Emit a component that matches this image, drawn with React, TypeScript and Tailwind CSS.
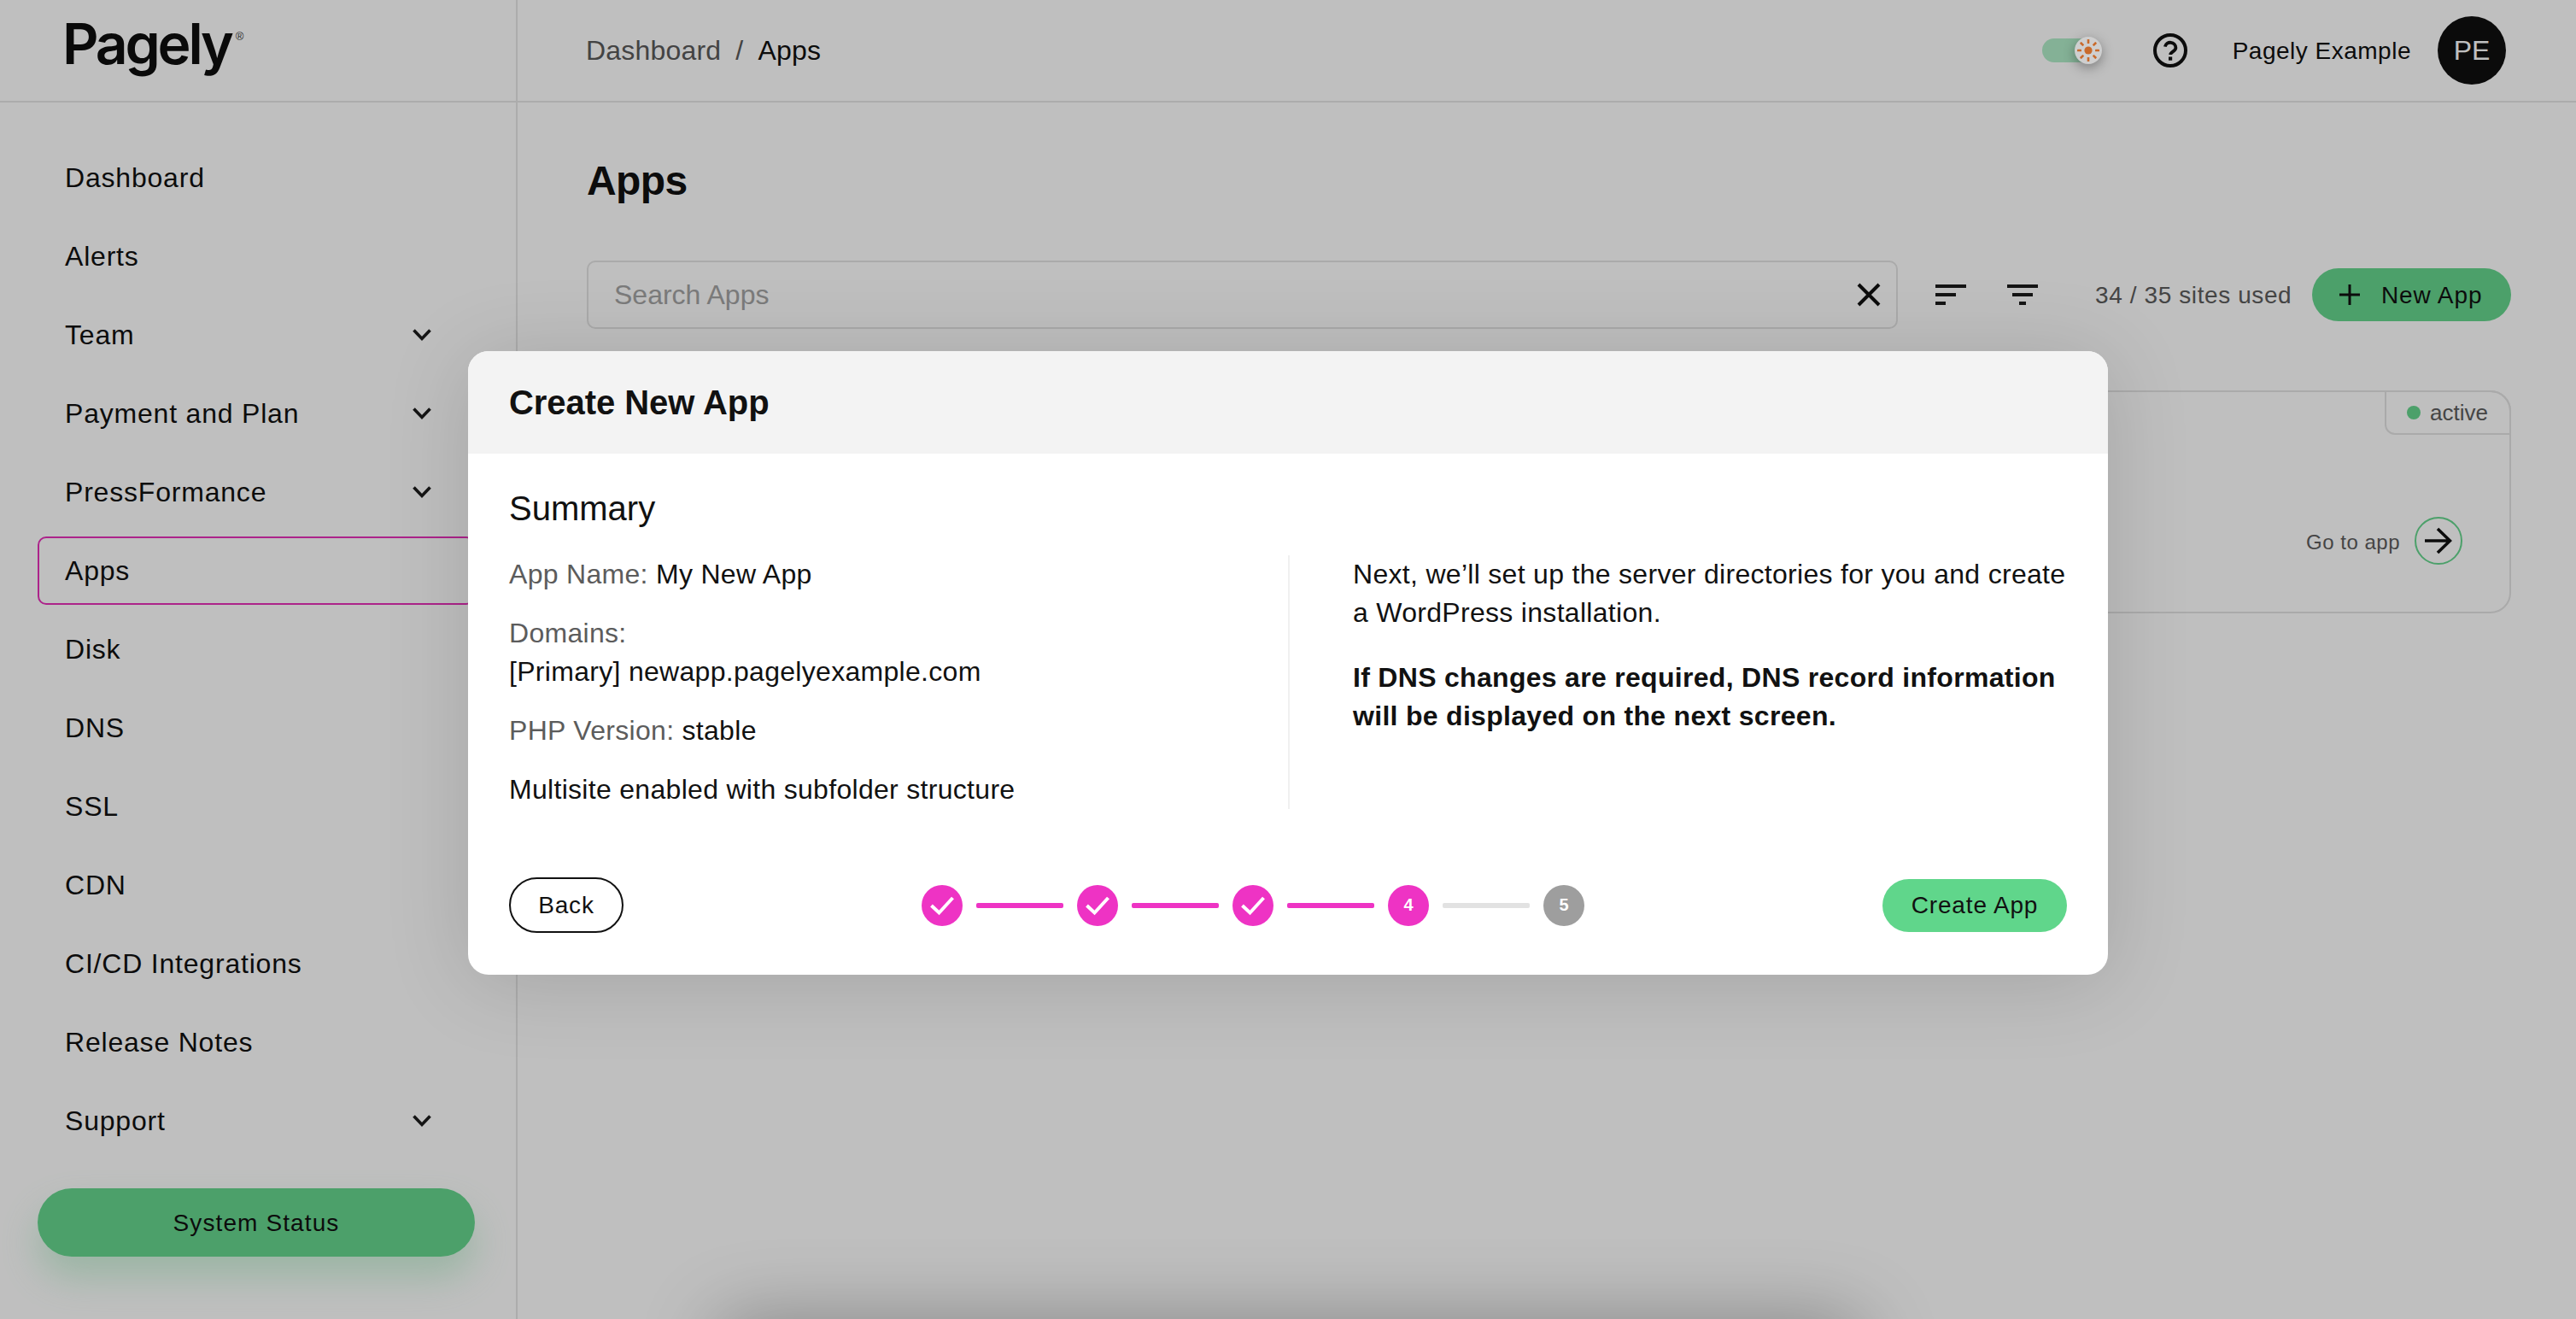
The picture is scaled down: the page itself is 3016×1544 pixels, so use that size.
import React from "react";

const Chevron = () => (
  <svg width="24" height="16" viewBox="0 0 24 16" fill="none" className="shrink-0">
    <polyline points="2.5,2.5 12,12.5 21.5,2.5" stroke="#1c1c1c" strokeWidth="3.6" />
  </svg>
);

const navItems: { label: string; chevron?: boolean; active?: boolean }[] = [
  { label: "Dashboard" },
  { label: "Alerts" },
  { label: "Team", chevron: true },
  { label: "Payment and Plan", chevron: true },
  { label: "PressFormance", chevron: true },
  { label: "Apps", active: true },
  { label: "Disk" },
  { label: "DNS" },
  { label: "SSL" },
  { label: "CDN" },
  { label: "CI/CD Integrations" },
  { label: "Release Notes" },
  { label: "Support", chevron: true },
];

const Check = () => (
  <svg width="48" height="48" viewBox="0 0 48 48" fill="none">
    <polyline points="11.5,24 20.5,32.5 36.5,15" stroke="#ffffff" strokeWidth="4" />
  </svg>
);

const Sun = () => (
  <svg width="30" height="30" viewBox="0 0 30 30" fill="#c96a2b">
    <circle cx="15" cy="15" r="4.6" />
    {[0, 45, 90, 135, 180, 225, 270, 315].map((a) => (
      <rect key={a} x="13.7" y="2" width="2.6" height="5" rx="0.6" transform={`rotate(${a} 15 15)`} />
    ))}
  </svg>
);

const Step = ({ children, gray }: { children: React.ReactNode; gray?: boolean }) => (
  <div
    className={
      gray
        ? "flex h-12 w-12 items-center justify-center rounded-full bg-[#9e9e9e] text-[20px] font-bold text-white"
        : "flex h-12 w-12 items-center justify-center rounded-full bg-[#ee33c4] text-[20px] font-bold text-white"
    }
  >
    {children}
  </div>
);

const Line = ({ gray }: { gray?: boolean }) => (
  <div className={gray ? "mx-4 h-[6px] w-[102px] rounded-[2px] bg-[#e2e2e2]" : "mx-4 h-[6px] w-[102px] rounded-[2px] bg-[#ee33c4]"} />
);

export default function App() {
  return (
    <div className="relative flex h-[1544px] w-[3016px] flex-col overflow-hidden bg-white text-[32px] leading-[45px] text-[#111111] [font-family:'Liberation_Sans',Arial,sans-serif]">
      {/* top bar */}
      <header className="flex h-[120px] shrink-0 items-center border-b-2 border-[#e6e6e6]">
        <div className="flex h-full w-[606px] shrink-0 items-center border-r-2 border-[#e6e6e6] pl-[73px]">
          <span className="pb-[16px] text-[66px] leading-none font-semibold tracking-[-3.2px] text-[#0e0e0e] [font-family:Inter,sans-serif]">Pagely</span>
          <span className="mb-[33px] ml-[5px] text-[13px] leading-none text-[#333]">®</span>
        </div>
        <div className="ml-[80px] flex items-center tracking-[0.2px]">
          <span className="text-[#5a5a5a]">Dashboard</span>
          <span className="mx-[17px] text-[#5a5a5a]">/</span>
          <span>Apps</span>
        </div>
        <div className="ml-auto flex items-center pr-[82px]">
          <div className="relative h-[28px] w-[60px] rounded-full bg-[#b0edc9]">
            <div className="absolute top-[-2px] left-[38px] z-50 flex h-8 w-8 items-center justify-center rounded-full bg-[#cfcfcf] shadow-[0_4px_14px_rgba(0,0,0,0.35)]">
              <Sun />
            </div>
          </div>
          <svg width="40" height="40" viewBox="0 0 40 40" fill="none" className="ml-[70px]">
            <circle cx="20" cy="20" r="18" stroke="#111111" strokeWidth="4" />
            <path d="M13.8 15.6a6.4 6.4 0 0 1 12.6 1.4c0 4-6.2 4.6-6.2 8" stroke="#111111" strokeWidth="3.8" />
            <rect x="18" y="27.5" width="4.2" height="4.2" fill="#111111" />
          </svg>
          <span className="ml-[53px] text-[28px] tracking-[0.5px]">Pagely Example</span>
          <div className="ml-[31px] flex h-20 w-20 items-center justify-center rounded-full bg-[#0f0f0f] text-[32px] text-white">PE</div>
        </div>
      </header>

      <div className="flex min-h-0 flex-1">
        {/* sidebar */}
        <aside className="flex w-[606px] shrink-0 flex-col border-r-2 border-[#e6e6e6] pt-[48px] pl-[44px]">
          <nav className="flex w-[512px] flex-col gap-3">
            {navItems.map((item) => (
              <div
                key={item.label}
                className={
                  item.active
                    ? "flex h-20 items-center justify-between rounded-[10px] border-2 border-[#e62fb9] pr-[49px] pl-[30px] tracking-[0.8px]"
                    : "flex h-20 items-center justify-between border-2 border-transparent pr-[48px] pl-[30px] tracking-[0.8px]"
                }
              >
                <span>{item.label}</span>
                {item.chevron && <Chevron />}
              </div>
            ))}
          </nav>
          <button className="mt-[39px] h-20 w-[512px] rounded-full bg-[#66d68e] text-[28px] tracking-[1.1px] shadow-[0_24px_44px_rgba(102,214,142,0.32)]">
            System Status
          </button>
        </aside>

        {/* main */}
        <main className="min-w-0 flex-1 pt-[60px] pr-[76px] pl-[81px]">
          <h1 className="text-[48px] leading-[64px] font-bold tracking-[-0.6px]">Apps</h1>
          <div className="mt-[61px] flex items-center">
            <div className="flex h-20 w-[1535px] items-center justify-between rounded-[10px] border-2 border-[#e3e3e3] pr-[17px] pl-[30px]">
              <span className="text-[#a4a4a4]">Search Apps</span>
              <svg width="30" height="30" viewBox="0 0 30 30" fill="none">
                <path d="M3 3l24 24M27 3L3 27" stroke="#111111" strokeWidth="4" />
              </svg>
            </div>
            <div className="ml-[44px] flex w-9 flex-col items-start gap-[6px]">
              <div className="h-1 w-9 bg-[#1c1c1c]" />
              <div className="h-1 w-6 bg-[#1c1c1c]" />
              <div className="h-1 w-3 bg-[#1c1c1c]" />
            </div>
            <div className="ml-[48px] flex w-9 flex-col items-center gap-[6px]">
              <div className="h-1 w-9 bg-[#1c1c1c]" />
              <div className="h-1 w-6 bg-[#1c1c1c]" />
              <div className="h-1 w-2 bg-[#1c1c1c]" />
            </div>
            <span className="ml-[67px] text-[28px] tracking-[0.6px] text-[#5c5c5c]">34 / 35 sites used</span>
            <button className="ml-auto flex h-[62px] w-[233px] items-center rounded-full bg-[#66d68e] pl-8 text-[28px] tracking-[0.9px]">
              <svg width="24" height="24" viewBox="0 0 24 24" fill="none" className="mr-[25px]">
                <path d="M12 0v24M0 12h24" stroke="#111111" strokeWidth="3" />
              </svg>
              New App
            </button>
          </div>
          <div className="relative mt-[72px] flex h-[261px] items-end justify-end rounded-[24px] border-2 border-[#e3e3e3] pr-[55px] pb-[55px]">
            <div className="absolute top-[-2px] right-[-2px] flex h-[52px] w-[148px] items-center rounded-tr-[24px] rounded-bl-[12px] border-2 border-[#e3e3e3] pl-[24px] text-[26px] text-[#5c5c5c]">
              <span className="mr-[11px] h-4 w-4 rounded-full bg-[#66d68e]" />
              active
            </div>
            <div className="flex items-center">
              <span className="mt-[2px] text-[24px] tracking-[0.5px] text-[#5c5c5c]">Go to app</span>
              <div className="ml-[17px] flex h-14 w-14 items-center justify-center rounded-full border-2 border-[#66d68e]">
                <svg width="32" height="32" viewBox="0 0 32 32" fill="none">
                  <path d="M0 16h30M15 2l14.5 14L15 30" stroke="#111111" strokeWidth="3.6" />
                </svg>
              </div>
            </div>
          </div>
        </main>
      </div>

      {/* shadow of the panel that lies just below the fold */}
      <div className="absolute top-[1544px] left-[840px] h-[100px] w-[1340px] rounded-[24px] shadow-[0_0_90px_rgba(0,0,0,0.3)]" />

      {/* modal overlay */}
      <div className="absolute inset-0 flex justify-center bg-black/25 pt-[411px]">
        <div className="h-[730px] w-[1920px] rounded-[24px] bg-white shadow-[0_8px_100px_rgba(0,0,0,0.14)]">
          <div className="flex h-[120px] items-center rounded-t-[24px] bg-[#f3f3f3] pl-[48px] text-[40px] font-bold tracking-[-0.05px]">
            Create New App
          </div>
          <div className="px-[48px] pt-[40px]">
            <h2 className="text-[40px] leading-[48px]">Summary</h2>
            <div className="mt-[31px] flex tracking-[0.3px]">
              <div className="w-[912px] shrink-0">
                <p><span className="text-[#5c5c5c]">App Name:</span> My New App</p>
                <p className="mt-6 text-[#5c5c5c]">Domains:</p>
                <p>[Primary] newapp.pagelyexample.com</p>
                <p className="mt-6"><span className="text-[#5c5c5c]">PHP Version:</span> stable</p>
                <p className="mt-6">Multisite enabled with subfolder structure</p>
              </div>
              <div className="flex-1 border-l-2 border-[#f0f0f0] pl-[74px]">
                <p>Next, we’ll set up the server directories for you and create a WordPress installation.</p>
                <p className="mt-[31px] font-bold">If DNS changes are required, DNS record information will be displayed on the next screen.</p>
              </div>
            </div>
            <div className="mt-[80px] flex items-center justify-between">
              <button className="h-[65px] w-[134px] rounded-full border-2 border-[#111111] text-[28px] tracking-[0.8px]">Back</button>
              <div className="flex items-center">
                <Step><Check /></Step>
                <Line />
                <Step><Check /></Step>
                <Line />
                <Step><Check /></Step>
                <Line />
                <Step>4</Step>
                <Line gray />
                <Step gray>5</Step>
              </div>
              <button className="h-[62px] w-[216px] rounded-full bg-[#60d68b] text-[28px] tracking-[0.85px]">Create App</button>
            </div>
          </div>
        </div>
      </div>
    </div>
  );
}
